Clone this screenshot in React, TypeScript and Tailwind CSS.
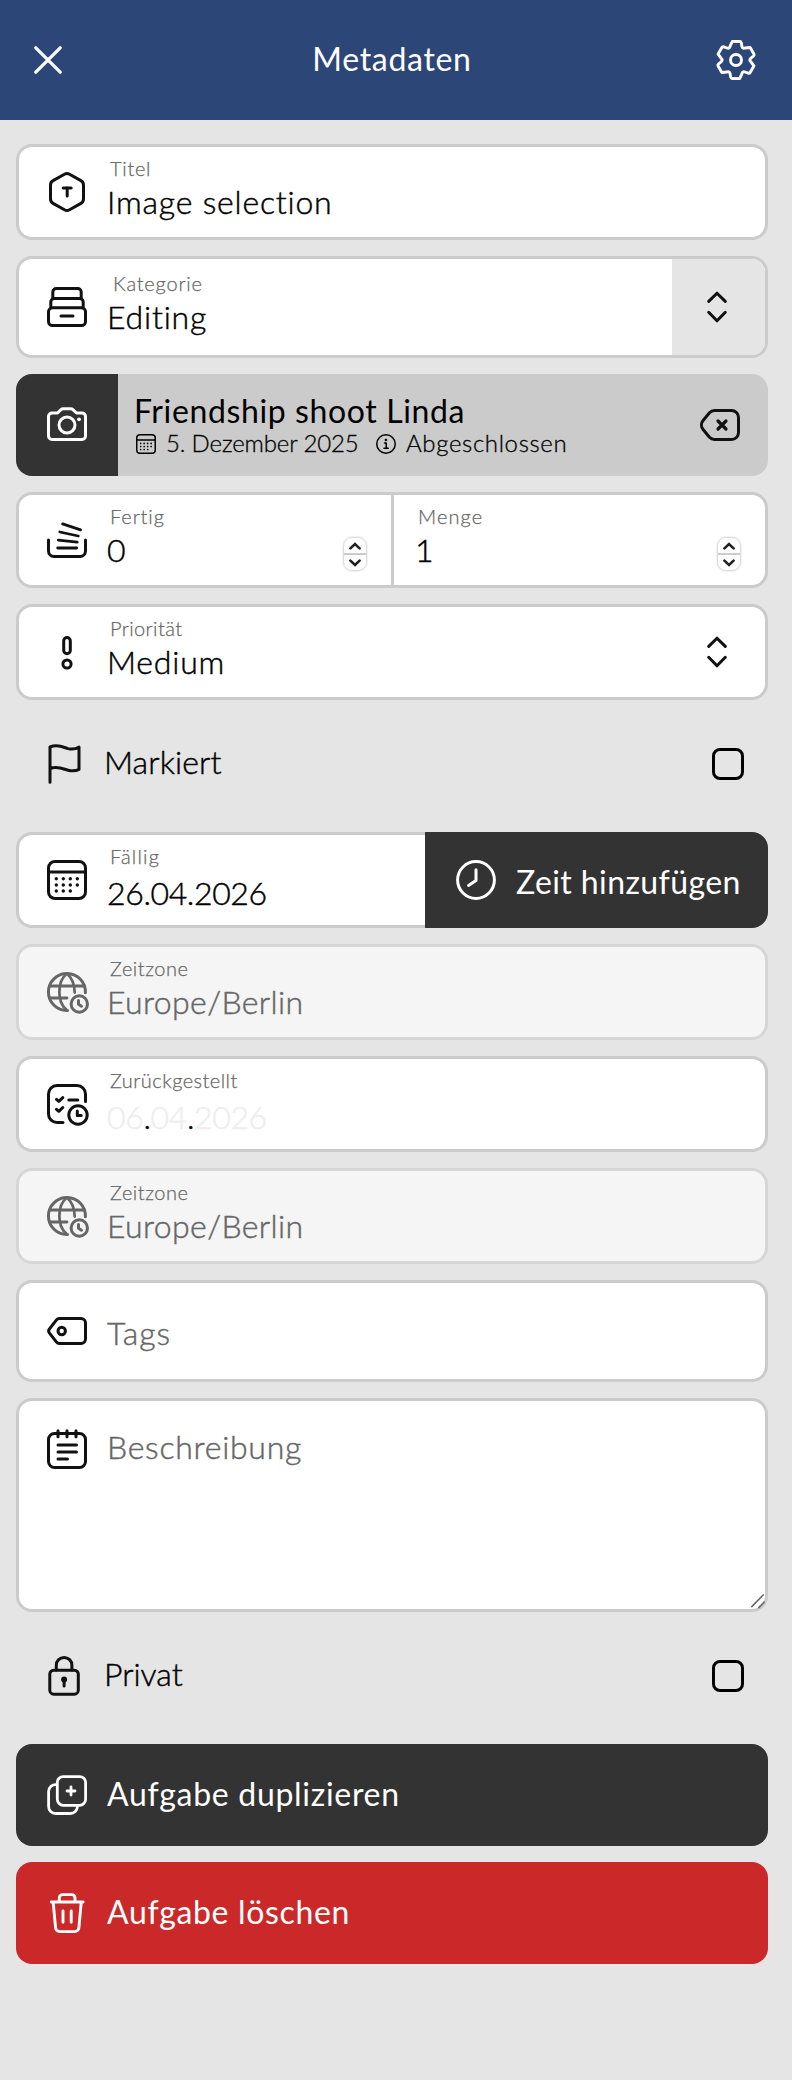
import { useState } from "react";
import type { ReactNode } from "react";
import clsx from "clsx";

type IconProps = { className?: string; stroke?: number; children?: ReactNode };

function Icon({ className = "size-10", stroke = 3, children }: IconProps) {
  return (
    <svg
      viewBox="0 0 40 40"
      fill="none"
      stroke="currentColor"
      strokeWidth={stroke}
      strokeLinecap="round"
      strokeLinejoin="round"
      className={clsx("shrink-0 overflow-visible", className)}
    >
      {children}
    </svg>
  );
}

// One tooth and the valley that follows it, repeated every 60 degrees
function gearPath() {
  let d = "";
  for (let i = 0; i < 6; i++) {
    const a = (i * Math.PI) / 3;
    const p = (x: number, y: number) =>
      `${(20 + x * Math.cos(a) - y * Math.sin(a)).toFixed(2)} ${(20 + x * Math.sin(a) + y * Math.cos(a)).toFixed(2)}`;
    d += `${i ? "L" : "M"}${p(-3.8, -18.5)}L${p(3.8, -18.5)}Q${p(5, -18.5)} ${p(5.3, -17.2)}L${p(5.9, -13.8)}Q${p(6.4, -11.1)} ${p(9, -12)}`;
  }
  return d + "Z";
}

const GearIcon = () => (
  <Icon stroke={2.9}>
    <path d={gearPath()} />
    <circle cx="20" cy="20" r="5.5" />
  </Icon>
);

const TitleIcon = () => (
  <Icon>
    <path d="M17.5 2.3a5 5 0 0 1 5 0l11 6.1a5.2 5.2 0 0 1 3 4.6v14a5.2 5.2 0 0 1-3 4.6l-11 6.1a5 5 0 0 1-5 0l-11-6.1a5.2 5.2 0 0 1-3-4.6V13a5.2 5.2 0 0 1 3-4.6z" />
    <line x1="16.2" y1="16" x2="24.2" y2="16" />
    <line x1="20.2" y1="16" x2="20.2" y2="24" />
  </Icon>
);

const CategoryIcon = () => (
  <Icon>
    <rect x="1.5" y="20.8" width="37" height="17.7" rx="4" />
    <path d="M3.8 20v-5a3.5 3.5 0 0 1 3.5-3.5h25.4a3.5 3.5 0 0 1 3.5 3.5v5" />
    <path d="M5.8 11V5a3.5 3.5 0 0 1 3.5-3.5h21.4A3.5 3.5 0 0 1 34.2 5v6" />
    <path d="M14 29h12" />
  </Icon>
);

const CameraIcon = () => (
  <Icon>
    <path d="M5 8h5.5l3.6-3.4a3 3 0 0 1 2-.8h7.8a3 3 0 0 1 2 .8L29.5 8H35a3.5 3.5 0 0 1 3.5 3.5V31a3.5 3.5 0 0 1-3.5 3.5H5A3.5 3.5 0 0 1 1.5 31V11.5A3.5 3.5 0 0 1 5 8z" />
    <circle cx="20" cy="20" r="8" />
    <circle cx="32" cy="14.3" r="1.9" fill="currentColor" stroke="none" />
  </Icon>
);

const CalendarIcon = ({ className }: { className?: string }) => (
  <Icon className={className}>
    <rect x="1.5" y="1.5" width="37" height="37" rx="6.5" />
    <path d="M1.5 12h37" />
    <path
      strokeWidth="3.4"
      d="M9.3 18.8h.01M16.3 18.8h.01M23.3 18.8h.01M30.3 18.8h.01M9.3 25h.01M16.3 25h.01M23.3 25h.01M30.3 25h.01M9.3 31h.01M16.3 31h.01M23.3 31h.01"
    />
  </Icon>
);

const InfoIcon = () => (
  <Icon className="size-5">
    <circle cx="20" cy="20" r="18.5" />
    <path d="M17 18h3.5v10M16 28.5h8.5" />
    <circle cx="19.8" cy="12" r="2.6" fill="currentColor" stroke="none" />
  </Icon>
);

const BackspaceIcon = () => (
  <Icon>
    <path d="M14.5 5.5h17a7 7 0 0 1 7 7v15a7 7 0 0 1-7 7h-17a7 7 0 0 1-5-2.2L3.1 24.5a7 7 0 0 1 0-9l6.4-7.8a7 7 0 0 1 5-2.2z" />
    <path strokeWidth="3.2" d="M18 16l8 8M26 16l-8 8" />
  </Icon>
);

const ChevronsIcon = () => (
  <Icon>
    <path d="M11.7 14.4 20 6.2l8.3 8.2M11.7 25.3l8.3 8.5 8.3-8.5" />
  </Icon>
);

const StackIcon = () => (
  <Icon>
    <path d="M1.5 20v11A5.5 5.5 0 0 0 7 36.5h26a5.5 5.5 0 0 0 5.5-5.5V20" />
    <path strokeWidth="2.8" d="M10.7 28h19M11.3 20.1l18.9 2.1M12.8 12l18.5 4M15.6 3.9l18 6" />
  </Icon>
);

const PriorityIcon = () => (
  <Icon>
    <rect x="16.7" y="5.5" width="6.6" height="16.2" rx="3.3" />
    <circle cx="20" cy="32" r="4.1" />
  </Icon>
);

const FlagIcon = () => (
  <Icon>
    <path d="M3 38.3V3c8-3.2 14 .5 18 1.6 4 1 8 .3 11-1.6v22.4c-3 1.6-7 1.8-11 .8-5-1.3-10-4.4-18-1.7" />
  </Icon>
);

const ClockIcon = () => (
  <Icon>
    <circle cx="20" cy="20" r="18.4" />
    <path d="M20 9.8v10.8l-7.5 4.9" />
  </Icon>
);

const TimezoneIcon = () => (
  <Icon>
    <path d="M38.4 20.8A18.5 18.5 0 1 0 20.4 38.5" />
    <path strokeWidth="2.8" d="M20 1.5c-10.2 8-10.2 29 0 36.8M20 1.5c5 4.5 7.6 10.5 7.7 19M2.6 14h34.8M2.6 26H20" />
    <circle cx="32.3" cy="32" r="8.2" />
    <path d="M31.5 28.4v3.9l3 1.9" />
  </Icon>
);

const DeferredIcon = () => (
  <Icon>
    <path d="M38.5 17.5V10a8.5 8.5 0 0 0-8.5-8.5H10A8.5 8.5 0 0 0 1.5 10v20a8.5 8.5 0 0 0 8.5 8.5h6" />
    <path d="m9.5 15.4 2.3 2 4-3.8M9.5 25.3l2.3 2 4-3.8M21.8 16h9" />
    <circle cx="31" cy="31" r="9.2" />
    <path d="M30.3 27v4.6h3.9" />
  </Icon>
);

const TagIcon = () => (
  <Icon>
    <path d="M12.5 7.5H34a4.5 4.5 0 0 1 4.5 4.5v16a4.5 4.5 0 0 1-4.5 4.5H12.5a4 4 0 0 1-3.2-1.6l-7-9.1a3 3 0 0 1 0-3.6l7-9.1a4 4 0 0 1 3.2-1.5z" />
    <circle cx="14.7" cy="20" r="3.7" />
  </Icon>
);

const NotesIcon = () => (
  <Icon>
    <rect x="1.5" y="4.5" width="37" height="34" rx="6" />
    <path d="M11 1.8v6M20 1.8v6M29 1.8v6M11 16h18.5M11 23h18.5M11 30h9.5" />
  </Icon>
);

const LockIcon = () => (
  <Icon>
    <rect x="2.8" y="14.2" width="28.5" height="24" rx="4" />
    <path d="M9.3 14V9.2a7.8 7.8 0 0 1 15.6 0V14M17.1 24v6" />
    <circle cx="17.1" cy="23.4" r="3" fill="currentColor" stroke="none" />
  </Icon>
);

const DuplicateIcon = () => (
  <Icon stroke={2.8}>
    <rect x="10.3" y="1.6" width="28.3" height="28.7" rx="6" />
    <path d="M9.5 9.6A7 7 0 0 0 1.6 16.5v15a7 7 0 0 0 7 7h14.8a7 7 0 0 0 7-6.6M24 12v8M20 16h8" />
  </Icon>
);

const TrashIcon = () => (
  <Icon stroke={2.9}>
    <path d="M4.3 9h31.8M12.3 8.5V5a3.4 3.4 0 0 1 3.4-3.4h8.9A3.4 3.4 0 0 1 28 5v3.5" />
    <path d="m6.2 9.5 2.4 25.3a4.2 4.2 0 0 0 4.2 3.8h14.9a4.2 4.2 0 0 0 4.2-3.8L34.2 9.5M16 18v11.3M24.2 18v11.3" />
  </Icon>
);

const light = "font-light [-webkit-text-stroke:0.45px_currentColor]";

function Label({ children, className = "tracking-[0.7px]" }: { children: ReactNode; className?: string }) {
  return (
    <span className={clsx("ml-[3px] text-[20px] leading-6 font-light text-[#666] [-webkit-text-stroke:0.25px_currentColor]", className)}>
      {children}
    </span>
  );
}

function Value({ children, className = "tracking-[0.8px]" }: { children: ReactNode; className?: string }) {
  return <span className={clsx("mt-0.5 text-[32px] leading-10", light, className)}>{children}</span>;
}

const card = "flex rounded-2xl border-[3px] border-[#cbcbcb] bg-white";

function Field({ icon, disabled, children }: { icon: ReactNode; disabled?: boolean; children: ReactNode }) {
  return (
    <div className={clsx("flex h-24 rounded-2xl border-[3px] pl-7", disabled ? "border-[#d6d6d6] bg-[#f5f5f5] text-[#666]" : "border-[#cbcbcb] bg-white")}>
      <div className={clsx("flex items-center", !disabled && "text-[#111]")}>{icon}</div>
      <div className="ml-5 flex flex-1 flex-col pt-[9px]">{children}</div>
    </div>
  );
}

function Stepper() {
  return (
    <div className="mt-auto mb-[14px] flex h-[34px] w-6 flex-col rounded-[9px] border border-[#ddd] text-[#222] shadow-[0_0_2px_rgba(0,0,0,0.2)]">
      <button className="flex flex-1 items-center justify-center border-b border-[#ccc]">
        <svg viewBox="0 0 12 8" className="h-2 w-3" fill="none" stroke="currentColor" strokeWidth="2.6" strokeLinecap="round">
          <path d="M1.4 6.4 6 2l4.6 4.4" />
        </svg>
      </button>
      <button className="flex flex-1 items-center justify-center border-t border-[#ccc]">
        <svg viewBox="0 0 12 8" className="h-2 w-3" fill="none" stroke="currentColor" strokeWidth="2.6" strokeLinecap="round">
          <path d="M1.4 1.6 6 6l4.6-4.4" />
        </svg>
      </button>
    </div>
  );
}

function CheckRow({ icon, label, className }: { icon: ReactNode; label: string; className: string }) {
  const [checked, setChecked] = useState(false);

  return (
    <label className="mb-1 flex h-24 items-center pr-6 pl-[31px]">
      <span className="text-[#111]">{icon}</span>
      <span className={clsx("ml-[17px] pb-1 text-[32px] leading-10", light, className)}>{label}</span>
      <input
        type="checkbox"
        checked={checked}
        onChange={() => setChecked(!checked)}
        className="ml-auto size-8 appearance-none rounded-lg border-[3px] border-black checked:bg-black"
      />
    </label>
  );
}

function ActionButton({ icon, children, className }: { icon: ReactNode; children: ReactNode; className: string }) {
  return (
    <button className={clsx("flex h-[102px] items-center rounded-2xl pl-[31px] text-white", className)}>
      {icon}
      <span className="ml-5 pb-[3px] text-[32px] leading-10">{children}</span>
    </button>
  );
}

export default function App() {
  return (
    <div className="min-h-[2080px] w-full bg-[#e5e5e5] font-['Lato',sans-serif] text-black">
      {/* Header */}
      <header className="flex h-[120px] items-center justify-between bg-[#2c4678] pr-9 pl-[34px] text-white">
        <svg viewBox="0 0 28 28" className="size-7" fill="none" stroke="currentColor" strokeWidth="3.2" strokeLinecap="round">
          <path d="M1.8 1.8l24.4 24.4M26.2 1.8 1.8 26.2" />
        </svg>
        <h1 className="pb-0.5 pl-1.5 text-[32px] leading-10 tracking-[0.68px]">Metadaten</h1>
        <GearIcon />
      </header>

      <main className="flex flex-col gap-4 pt-6 pr-6 pl-4">
        <Field icon={<TitleIcon />}>
          <Label>Titel</Label>
          <Value>Image selection</Value>
        </Field>

        {/* Category */}
        <div className={clsx(card, "h-[102px] overflow-hidden pl-7")}>
          <div className="flex items-center text-[#111]">
            <CategoryIcon />
          </div>
          <div className="ml-5 flex flex-1 flex-col pt-3">
            <Label className="pl-[3px] tracking-[0.79px]">Kategorie</Label>
            <Value>Editing</Value>
          </div>
          <div className="flex w-[93px] items-center bg-[#e5e5e5] pl-[25px] text-[#111]">
            <ChevronsIcon />
          </div>
        </div>

        {/* Linked project */}
        <div className="flex h-[102px] overflow-hidden rounded-2xl bg-[#cbcbcb]">
          <div className="flex w-[102px] items-center bg-[#333] pl-[31px] text-white">
            <CameraIcon />
          </div>
          <div className="flex flex-1 flex-col pt-[17px] pl-4">
            <span className="text-[32px] leading-10 tracking-[0.62px]">Friendship shoot Linda</span>
            <div className="-mt-0.5 ml-0.5 flex items-center text-[24px] leading-7 font-light [-webkit-text-stroke:0.3px_currentColor]">
              <CalendarIcon className="mt-0.5 size-5" />
              <span className="ml-2.5 w-[210px] tracking-[-0.14px]">5. Dezember 2025</span>
              <span className="mt-0.5">
                <InfoIcon />
              </span>
              <span className="ml-2.5 tracking-[0.64px]">Abgeschlossen</span>
            </div>
          </div>
          <div className="flex items-center pr-7 text-[#111]">
            <BackspaceIcon />
          </div>
        </div>

        {/* Progress */}
        <div className={clsx(card, "h-24")}>
          <div className="flex w-[375px] border-r-[3px] border-[#cbcbcb] pr-6 pl-7">
            <div className="flex items-center text-[#111]">
              <StackIcon />
            </div>
            <div className="ml-5 flex flex-1 flex-col pt-[9px]">
              <Label className="tracking-[0.88px]">Fertig</Label>
              <Value>0</Value>
            </div>
            <Stepper />
          </div>
          <div className="flex flex-1 pr-6 pl-[21px]">
            <div className="flex flex-1 flex-col pt-[9px]">
              <Label className="tracking-[1.1px]">Menge</Label>
              <Value>1</Value>
            </div>
            <Stepper />
          </div>
        </div>

        <div className={clsx(card, "h-24 items-center pr-7 pl-7 text-[#111]")}>
          <PriorityIcon />
          <div className="ml-5 flex flex-1 flex-col self-stretch pt-[9px] text-black">
            <Label className="tracking-[0.4px]">Priorität</Label>
            <Value>Medium</Value>
          </div>
          <ChevronsIcon />
        </div>

        <CheckRow icon={<FlagIcon />} label="Markiert" className="tracking-[0.12px]" />

        {/* Due date */}
        <div className="flex h-24">
          <div className="flex w-[409px] rounded-l-2xl border-y-[3px] border-l-[3px] border-[#cbcbcb] bg-white pl-7">
            <div className="flex items-center text-[#111]">
              <CalendarIcon className="size-10" />
            </div>
            <div className="ml-5 flex flex-col pt-[9px]">
              <Label className="tracking-[1.2px]">Fällig</Label>
              <Value className="pt-[3px] tracking-[-0.37px]">26.04.2026</Value>
            </div>
          </div>
          <button className="flex flex-1 items-center rounded-r-2xl bg-[#333] pl-[31px] text-white">
            <ClockIcon />
            <span className="ml-5 pt-[3px] text-[32px] leading-10 tracking-[0.41px]">Zeit hinzufügen</span>
          </button>
        </div>

        <Field icon={<TimezoneIcon />} disabled>
          <Label className="tracking-[0.5px]">Zeitzone</Label>
          <Value className="tracking-[0.38px]">Europe/Berlin</Value>
        </Field>

        <Field icon={<DeferredIcon />}>
          <Label className="tracking-[0.46px]">Zurückgestellt</Label>
          <Value className="pt-[3px] tracking-[-0.37px]">
            <span className="text-[#eee]">06</span>.<span className="text-[#eee]">04</span>.<span className="text-[#eee]">2026</span>
          </Value>
        </Field>

        <Field icon={<TimezoneIcon />} disabled>
          <Label className="tracking-[0.5px]">Zeitzone</Label>
          <Value className="tracking-[0.38px]">Europe/Berlin</Value>
        </Field>

        <div className={clsx(card, "h-[102px] items-center pl-7 text-[#111]")}>
          <TagIcon />
          <span className={clsx("ml-5 pt-[3px] text-[32px] leading-10 tracking-[0.98px] text-[#666]", light)}>Tags</span>
        </div>

        {/* Description */}
        <div className={clsx(card, "relative h-[214px] items-start pt-7 pl-7 text-[#111]")}>
          <NotesIcon />
          <span className={clsx("-mt-0.5 ml-5 text-[32px] leading-10 tracking-[0.73px] text-[#666]", light)}>Beschreibung</span>
          <svg viewBox="0 0 16 16" className="absolute right-0 bottom-0 size-4" fill="none" stroke="#666" strokeWidth="1.6" strokeLinecap="round">
            <path d="M2.8 13.6 14.2 2M9.8 14.6 15 9.2" />
          </svg>
        </div>

        <CheckRow icon={<LockIcon />} label="Privat" className="tracking-normal" />

        <ActionButton icon={<DuplicateIcon />} className="bg-[#333] tracking-[0.7px]">
          Aufgabe duplizieren
        </ActionButton>
        <ActionButton icon={<TrashIcon />} className="bg-[#cb2929] tracking-[0.66px]">
          Aufgabe löschen
        </ActionButton>
      </main>
    </div>
  );
}
